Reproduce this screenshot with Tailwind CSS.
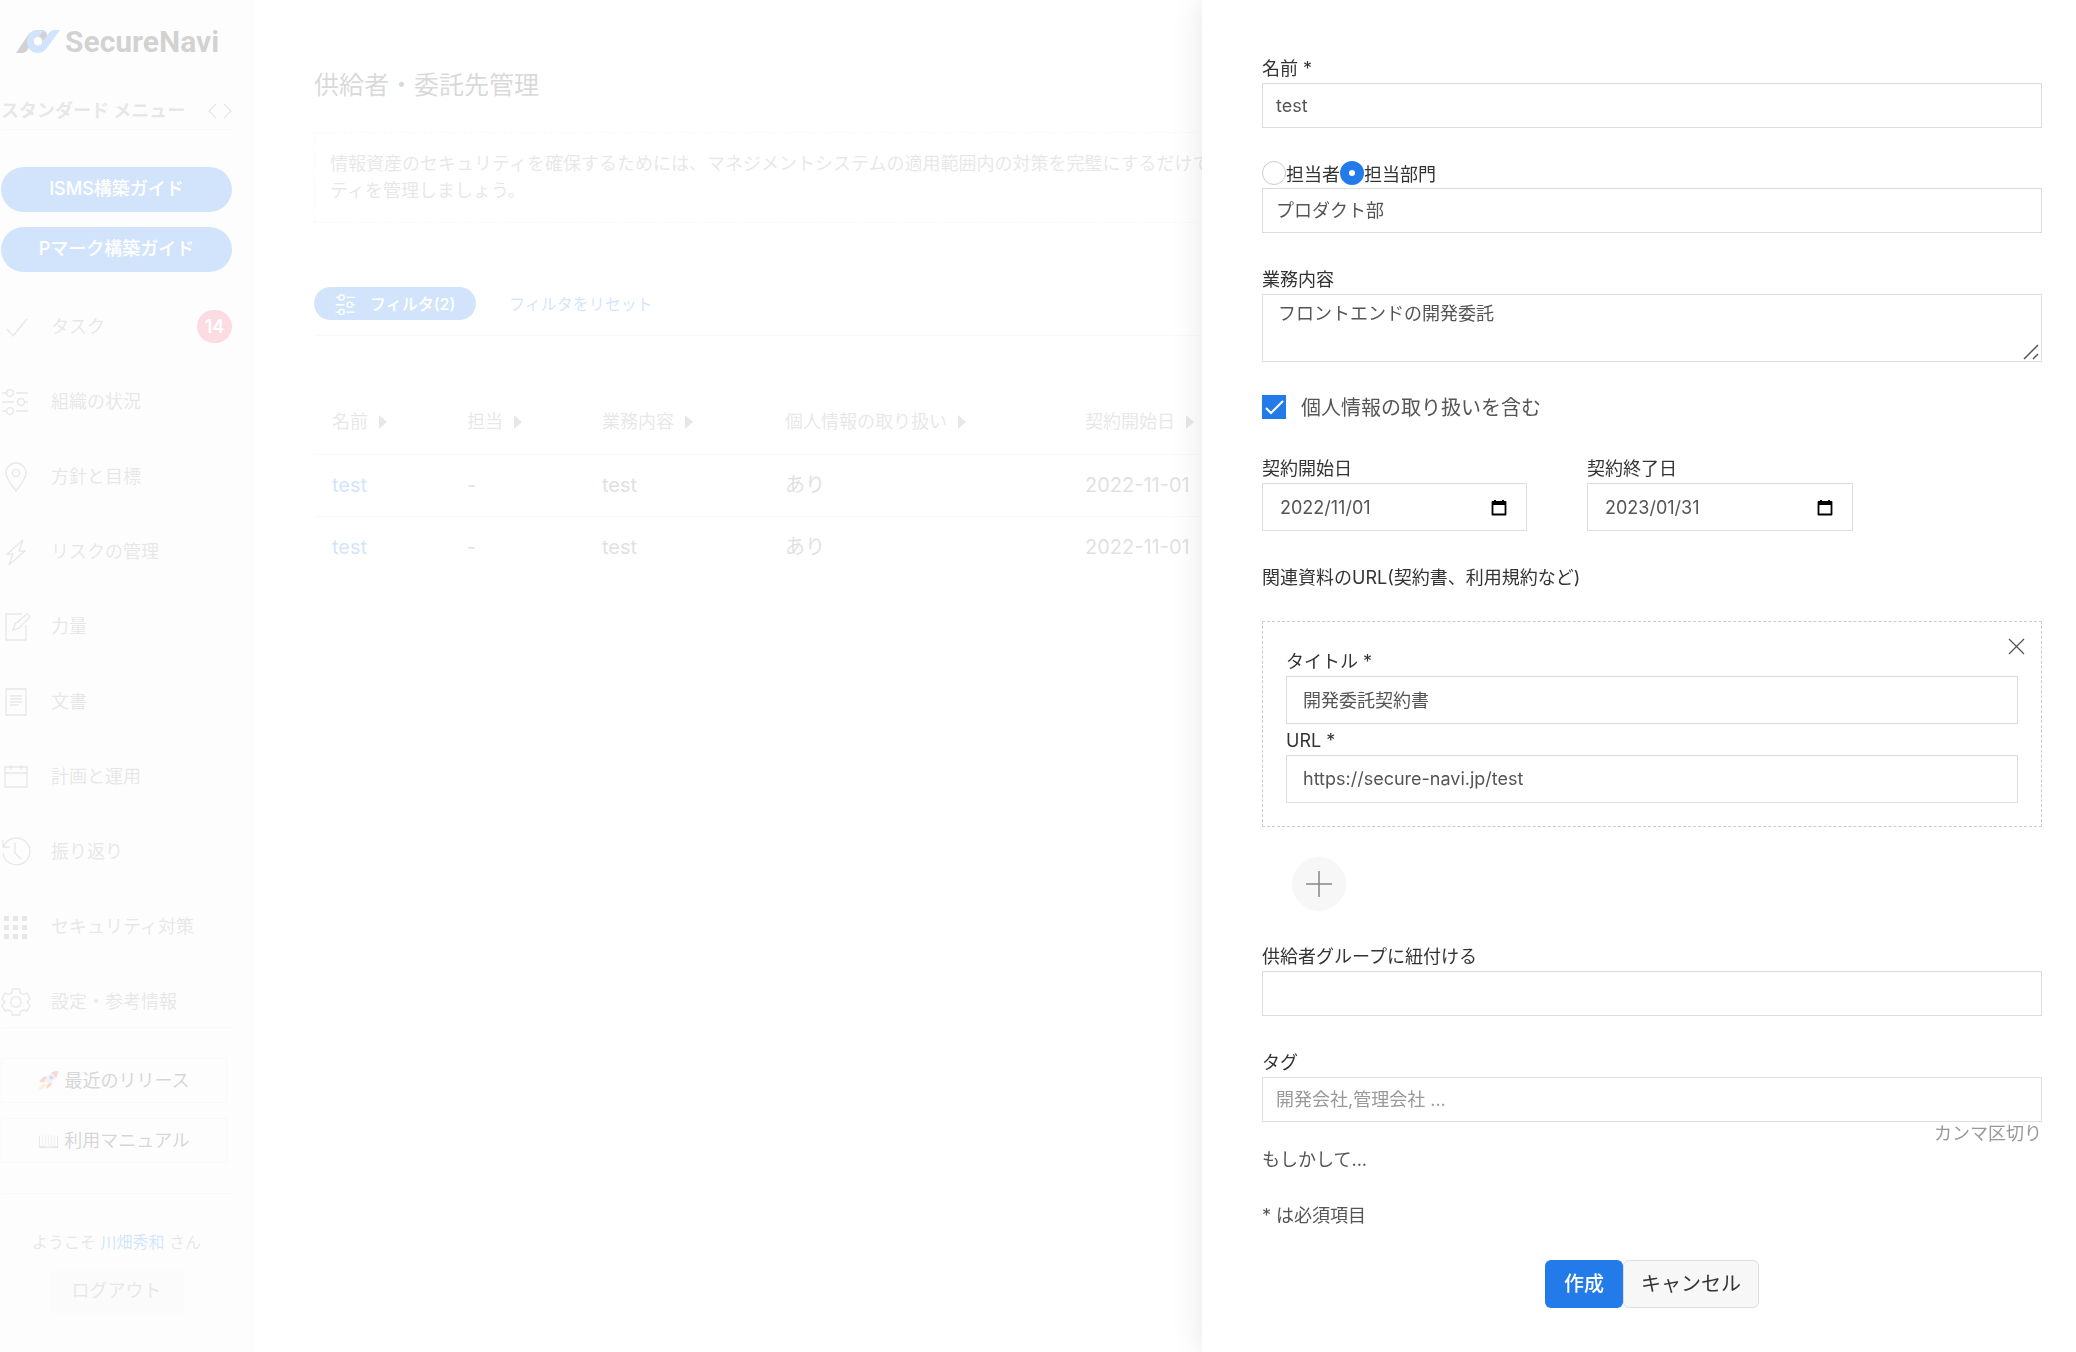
<!DOCTYPE html>
<html lang="ja">
<head>
<meta charset="utf-8">
<meta name="viewport" content="width=device-width, initial-scale=1">
<title>SecureNavi - 供給者・委託先管理</title>
<script src="https://cdn.jsdelivr.net/npm/@tailwindcss/browser@4"></script>
</head>
<body class="bg-white font-['Inter','Noto_Sans_CJK_JP',sans-serif] text-[18px] text-[#666]">

<div class="flex min-h-screen overflow-hidden">
  <!-- Sidebar -->
  <aside class="w-[254px] shrink-0 bg-[#f6f6f6] pl-px pr-[22px] text-[#888]">
    <a href="#" class="flex h-[82px] items-center gap-[5px] pl-[15px] text-[30px] font-bold text-[#222] font-['Roboto','Inter',sans-serif]">
      <svg class="h-[23px] w-[44px]" viewBox="0 0 44 23" fill="none">
        <path d="M0 23 12 5Q16 0 22 0h5q5 2 4 7L26 12 17 6 12 19q-2 4-6 4z" fill="#222"/>
        <path d="M22 0c3 0 5 .6 6 1.500C25 3 24 4 23 7.500c-3 0-5 1.500-5 4s2 4 4 4 4-1 4-3.500L33 3q2-3 5-3h6L31 18q-4 5-9 5C15 23 11 18 11 12S15 0 22 0z" fill="#227be8"/>
        <circle cx="22" cy="11" r="4" fill="#fff"/>
      </svg>
      SecureNavi
    </a>
    <div class="flex h-[48px] items-center justify-between border-b border-[#e2e2e2] pt-[10px] font-bold whitespace-nowrap">
      <span>スタンダード メニュー</span>
      <button type="button" aria-label="メニュー切替">
        <svg class="h-[16px] w-[24px]" viewBox="0 0 24 16" fill="none" stroke="#888" stroke-width="1.200"><path d="M8 1 1 8l7 7M16 1l7 7-7 7"/></svg>
      </button>
    </div>
    <div class="mt-[37px] flex flex-col gap-[15px] font-medium text-white">
      <button type="button" class="h-[45px] rounded-full bg-[#227be8] pb-[3px]">ISMS構築ガイド</button>
      <button type="button" class="h-[45px] rounded-full bg-[#227be8] pb-[3px]">Pマーク構築ガイド</button>
    </div>
    <nav class="mt-[17px] border-b border-[#e2e2e2]">
      <a href="#" class="flex h-[75px] items-center">
        <svg class="mr-[18px] size-[32px]" viewBox="0 0 32 32" fill="none" stroke="#888" stroke-width="1.300"><path d="m6 18 6 7L26 8"/></svg>
        <span class="flex-1">タスク</span>
        <span class="flex h-[33px] w-[35px] items-center justify-center rounded-full bg-[#f0506e] font-semibold text-white">14</span>
      </a>
      <a href="#" class="flex h-[75px] items-center">
        <svg class="mr-[18px] size-[32px]" viewBox="0 0 32 32" fill="none" stroke="#888" stroke-width="1.300"><path d="M1 7h5M15 7h12M1 16h12M23 16h4M1 25h5M15 25h12"/><circle cx="9" cy="7" r="3.400"/><circle cx="20" cy="16" r="3.400"/><circle cx="9" cy="25" r="3.400"/></svg>
        <span>組織の状況</span>
      </a>
      <a href="#" class="flex h-[75px] items-center">
        <svg class="mr-[18px] size-[32px]" viewBox="0 0 32 32" fill="none" stroke="#888" stroke-width="1.300"><path d="M15 30C11 24 5 18 5 12a10 10 0 0 1 20 0c0 6-6 12-10 18z"/><circle cx="15" cy="12" r="3.700"/></svg>
        <span>方針と目標</span>
      </a>
      <a href="#" class="flex h-[75px] items-center">
        <svg class="mr-[18px] size-[32px]" viewBox="0 0 32 32" fill="none" stroke="#888" stroke-width="1.300" stroke-linejoin="round"><path d="M22 4 6 18h6L8 29l16-14h-6z"/></svg>
        <span>リスクの管理</span>
      </a>
      <a href="#" class="flex h-[75px] items-center">
        <svg class="mr-[18px] size-[32px]" viewBox="0 0 32 32" fill="none" stroke="#888" stroke-width="1.300"><path d="M21 3H5v26h20V14"/><path d="m12 19 2-6L26 3q3 1 3 3L18 17z"/></svg>
        <span>力量</span>
      </a>
      <a href="#" class="flex h-[75px] items-center">
        <svg class="mr-[18px] size-[32px]" viewBox="0 0 32 32" fill="none" stroke="#888" stroke-width="1.300"><path d="M5 3h20v26H5zM9 10h12M9 13h12M9 16h12M9 19h9"/></svg>
        <span>文書</span>
      </a>
      <a href="#" class="flex h-[75px] items-center">
        <svg class="mr-[18px] size-[32px]" viewBox="0 0 32 32" fill="none" stroke="#888" stroke-width="1.300"><path d="M4 6h22v20H4zM4 12h22M10 4v5M20 4v5"/></svg>
        <span>計画と運用</span>
      </a>
      <a href="#" class="flex h-[75px] items-center">
        <svg class="mr-[18px] size-[32px]" viewBox="0 0 32 32" fill="none" stroke="#888" stroke-width="1.300"><path d="M2 4v7h7M3 10A13.500 13.500 0 1 1 2 17M14 7v10l6 6"/></svg>
        <span>振り返り</span>
      </a>
      <a href="#" class="flex h-[75px] items-center">
        <svg class="mr-[18px] size-[32px]" viewBox="0 0 32 32" fill="#888"><path d="M3 5h5v5H3zM12 5h5v5h-5zM21 5h5v5h-5zM3 14h5v5H3zM12 14h5v5h-5zM21 14h5v5h-5zM3 23h5v5H3zM12 23h5v5h-5zM21 23h5v5h-5z"/></svg>
        <span>セキュリティ対策</span>
      </a>
      <a href="#" class="flex h-[63px] items-center pt-[12px]">
        <svg class="mr-[18px] size-[32px]" viewBox="0 0 32 32" fill="none" stroke="#888" stroke-width="1.300" stroke-linejoin="round"><path d="M11.500 3h7l.8 4 2.700 1.500L26 7l3 6-3 3 3 3.500-3 5.500-4-1-2.700 1.500-.8 3.500h-7l-.8-3.500L8 24l-4 1-3-5.500L4 16l-3-3 3-6 4 1.500L10.700 7z"/><circle cx="15" cy="16" r="5.200"/></svg>
        <span>設定・参考情報</span>
      </a>
    </nav>
    <div class="mt-[30px] mr-[5px] flex flex-col gap-[15px] text-[#333]">
      <a href="#" class="flex h-[45px] items-center justify-center gap-[5px] border border-[#e2e2e2]">
        <svg class="size-[21px]" viewBox="0 0 22 22"><path d="M1 12 6 7h5l-5 6zM9 20l5-4 1-5-6 5z" fill="#d7352c"/><path d="M21 1c-6 0-10 3-14 10l4 4C18 11 21 7 21 1z" fill="#b9c3cc"/><path d="m14 3 5 5q2-4 2-7-4 0-7 2z" fill="#d7352c"/><circle cx="14" cy="8" r="2" fill="#35628c"/><path d="m6 13-4 4-1 4 4-1 4-4z" fill="#fdb73b"/></svg>
        最近のリリース
      </a>
      <a href="#" class="flex h-[45px] items-center justify-center gap-[5px] border border-[#e2e2e2]">
        <svg class="size-[21px]" viewBox="0 0 22 22"><path d="M1 6h20v13H1z" fill="#5b92b5"/><path d="M2 4q5-1 9 1 4-2 9-1v13q-5-1-9 1-4-2-9-1z" fill="#eee"/><path d="M11 5v13M14 6v10M17 6v10M5 6v10M8 6v10" stroke="#bbb" fill="none"/></svg>
        利用マニュアル
      </a>
    </div>
    <div class="mt-[30px] border-t border-[#e2e2e2] pt-[33px] text-center">
      <p class="text-[16px] leading-[30px]">ようこそ <a href="#" class="text-[#227be8]">川畑秀和</a> さん</p>
      <button type="button" class="mt-[14px] h-[42px] w-[134px] bg-[#e8e8e8] pb-[3px]">ログアウト</button>
    </div>
  </aside>

  <!-- Supplier list -->
  <main class="min-w-0 flex-1 px-[60px] pt-[66px]">
    <h1 class="text-[25px] leading-[38px] text-[#444]">供給者・委託先管理</h1>
    <p class="mt-[28px] border border-dashed border-[#ddd] px-[15px] pt-[17px] pb-[18px] leading-[27px] whitespace-nowrap text-[#888]">情報資産のセキュリティを確保するためには、マネジメントシステムの適用範囲内の対策を完璧にするだけでは<br>ティを管理しましょう。</p>
    <div class="mt-[64px] flex items-center gap-[33px] border-b border-[#e2e2e2] pb-[15px] text-[16px]">
      <button type="button" class="flex h-[33px] w-[162px] items-center gap-[13px] rounded-full bg-[#227be8] pl-[21px] font-medium text-white">
        <svg class="size-[22px]" viewBox="0 0 30 30" fill="none" stroke="#fff" stroke-width="1.800"><path d="M1 6h5M15 6h12M1 16h12M23 16h4M1 26h5M15 26h12"/><circle cx="9" cy="6" r="3.600"/><circle cx="20" cy="16" r="3.600"/><circle cx="9" cy="26" r="3.600"/></svg>
        <span>フィルタ(2)</span>
      </button>
      <a href="#" class="text-[#227be8]">フィルタをリセット</a>
    </div>
    <table class="mt-[54px] w-full table-fixed text-left whitespace-nowrap">
      <thead class="text-[#888]">
        <tr class="h-[64px] border-b border-[#e2e2e2]">
          <th class="w-[135px] pl-[18px] font-normal"><span class="flex items-center gap-[11px]">名前<svg class="h-[14px] w-[8px]" viewBox="0 0 8 14" fill="#888"><path d="m0 0 8 7-8 7z"/></svg></span></th>
          <th class="w-[135px] pl-[18px] font-normal"><span class="flex items-center gap-[11px]">担当<svg class="h-[14px] w-[8px]" viewBox="0 0 8 14" fill="#888"><path d="m0 0 8 7-8 7z"/></svg></span></th>
          <th class="w-[183px] pl-[18px] font-normal"><span class="flex items-center gap-[11px]">業務内容<svg class="h-[14px] w-[8px]" viewBox="0 0 8 14" fill="#888"><path d="m0 0 8 7-8 7z"/></svg></span></th>
          <th class="w-[300px] pl-[18px] font-normal"><span class="flex items-center gap-[11px]">個人情報の取り扱い<svg class="h-[14px] w-[8px]" viewBox="0 0 8 14" fill="#888"><path d="m0 0 8 7-8 7z"/></svg></span></th>
          <th class="pl-[18px] font-normal"><span class="flex items-center gap-[11px]">契約開始日<svg class="h-[14px] w-[8px]" viewBox="0 0 8 14" fill="#888"><path d="m0 0 8 7-8 7z"/></svg></span></th>
        </tr>
      </thead>
      <tbody class="text-[20px] leading-[30px]">
        <tr class="h-[62px] border-b border-[#e2e2e2]">
          <td class="pl-[18px]"><a href="#" class="text-[#227be8]">test</a></td>
          <td class="pl-[18px]">-</td>
          <td class="pl-[18px]">test</td>
          <td class="pl-[18px]">あり</td>
          <td class="pl-[18px]">2022-11-01</td>
        </tr>
        <tr class="h-[62px]">
          <td class="pl-[18px]"><a href="#" class="text-[#227be8]">test</a></td>
          <td class="pl-[18px]">-</td>
          <td class="pl-[18px]">test</td>
          <td class="pl-[18px]">あり</td>
          <td class="pl-[18px]">2022-11-01</td>
        </tr>
      </tbody>
    </table>
  </main>
</div>

<!-- Backdrop and side drawer -->
<div class="fixed inset-0 bg-white/80"></div>
<section class="fixed inset-y-0 right-0 w-[874px] max-w-full overflow-hidden bg-white pt-[53px] pr-[34px] pl-[60px] shadow-[0_0_30px_rgba(0,0,0,0.1)]">
  <form class="flex flex-col text-[#555]">
    <label for="name" class="pt-[2px] leading-[28px] text-[#333]">名前 *</label>
    <input id="name" type="text" value="test" class="h-[45px] w-full border border-[#ddd] px-[13px]">

    <div class="mt-[30px] flex h-[30px] items-center text-[#333]">
      <input id="person" name="owner" type="radio" class="size-[24px] appearance-none rounded-full border border-[#ccc] bg-white">
      <label for="person" class="pt-[2px]">担当者</label>
      <input id="dept" name="owner" type="radio" checked class="size-[24px] appearance-none rounded-full border-[9px] border-[#227be8] bg-white">
      <label for="dept" class="pt-[2px]">担当部門</label>
    </div>
    <input type="text" aria-label="担当部門名" value="プロダクト部" class="h-[45px] w-full border border-[#ddd] px-[13px] pb-[3px]">

    <label for="work" class="mt-[31px] pt-[2px] leading-[28px] text-[#333]">業務内容</label>
    <div class="relative">
      <textarea id="work" class="block h-[68px] w-full resize-none border border-[#ddd] px-[15px] py-[5px] leading-[27px]">フロントエンドの開発委託</textarea>
      <svg class="absolute right-[3px] bottom-[2px] size-[16px]" viewBox="0 0 16 16" fill="none" stroke="#555" stroke-width="1.500"><path d="M1 15 15 1M10 15l5-5"/></svg>
    </div>

    <div class="mt-[30px] flex h-[30px] items-center gap-[15px] text-[20px]">
      <span class="relative size-[24px]">
        <input id="pii" type="checkbox" checked class="block size-[24px] appearance-none bg-[#227be8]">
        <svg class="pointer-events-none absolute inset-0 size-[24px]" viewBox="0 0 24 24" fill="none" stroke="#fff" stroke-width="2"><path d="m4 13 5 5L21 6"/></svg>
      </span>
      <label for="pii" class="pt-[2px]">個人情報の取り扱いを含む</label>
    </div>

    <div class="mt-[31px] flex gap-[60px]">
      <div class="w-[265px]">
        <label for="start" class="block pt-[2px] leading-[28px] text-[#333]">契約開始日</label>
        <div class="flex h-[48px] items-center border border-[#ddd] pr-[19px] pl-[17px]">
          <input id="start" type="text" value="2022/11/01" class="min-w-0 flex-1">
          <button type="button" aria-label="開始日を選択"><svg class="h-[17px] w-[16px]" viewBox="0 0 16 17"><path d="M1.500 3h13v12.500h-13z" fill="#fff" stroke="#000" stroke-width="1.800" stroke-linejoin="round"/><path d="M1 2.500h14V6H1zM3 1h2v2H3zM11 1h2v2h-2z"/></svg></button>
        </div>
      </div>
      <div class="w-[266px]">
        <label for="end" class="block pt-[2px] leading-[28px] text-[#333]">契約終了日</label>
        <div class="flex h-[48px] items-center border border-[#ddd] pr-[19px] pl-[17px]">
          <input id="end" type="text" value="2023/01/31" class="min-w-0 flex-1">
          <button type="button" aria-label="終了日を選択"><svg class="h-[17px] w-[16px]" viewBox="0 0 16 17"><path d="M1.500 3h13v12.500h-13z" fill="#fff" stroke="#000" stroke-width="1.800" stroke-linejoin="round"/><path d="M1 2.500h14V6H1zM3 1h2v2H3zM11 1h2v2h-2z"/></svg></button>
        </div>
      </div>
    </div>

    <p class="mt-[31px] pt-[2px] leading-[28px] text-[#333]">関連資料のURL(契約書、利用規約など)</p>
    <div class="relative mt-[29px] flex flex-col border border-dashed border-[#ccc] px-[23px] pt-[24px] pb-[23px]">
      <button type="button" aria-label="削除" class="absolute top-[16px] right-[16px]"><svg class="size-[17px]" viewBox="0 0 17 17" fill="none" stroke="#555" stroke-width="1.300"><path d="m1 1 15 15M16 1 1 16"/></svg></button>
      <label for="doc-title" class="pt-[2px] leading-[28px] text-[#333]">タイトル *</label>
      <input id="doc-title" type="text" value="開発委託契約書" class="h-[48px] w-full border border-[#ddd] px-[16px] pb-[2px]">
      <label for="doc-url" class="mt-px pt-[2px] leading-[28px] text-[#333]">URL *</label>
      <input id="doc-url" type="text" value="https://secure-navi.jp/test" class="h-[48px] w-full border border-[#ddd] px-[16px] pb-[2px]">
    </div>
    <button type="button" aria-label="追加" class="mt-[30px] ml-[30px] flex size-[54px] items-center justify-center rounded-full bg-[#f7f7f7]"><svg class="size-[26px]" viewBox="0 0 26 26" fill="none" stroke="#888" stroke-width="1.500"><path d="M13 0v26M0 13h26"/></svg></button>

    <label for="group" class="mt-[30px] pt-[2px] leading-[28px] text-[#333]">供給者グループに紐付ける</label>
    <input id="group" type="text" class="h-[45px] w-full border border-[#ddd] px-[13px]">

    <label for="tags" class="mt-[31px] pt-[2px] leading-[28px] text-[#333]">タグ</label>
    <input id="tags" type="text" placeholder="開発会社,管理会社 ..." class="h-[45px] w-full border border-[#ddd] px-[13px] placeholder:text-[#999]">
    <p class="pt-[2px] text-right leading-[20px] text-[#999]">カンマ区切り</p>
    <p class="pt-[2px] leading-[28px]">もしかして...</p>
    <p class="mt-[26px] pt-[2px] leading-[28px]">* は必須項目</p>
    <div class="mt-[30px] flex justify-center text-[20px]">
      <button type="submit" class="h-[48px] w-[78px] rounded-md bg-[#227be8] font-medium text-white">作成</button>
      <button type="button" class="h-[48px] w-[136px] rounded-md border border-[#ddd] bg-[#f7f7f7] text-[#333]">キャンセル</button>
    </div>
  </form>
</section>
</body>
</html>
